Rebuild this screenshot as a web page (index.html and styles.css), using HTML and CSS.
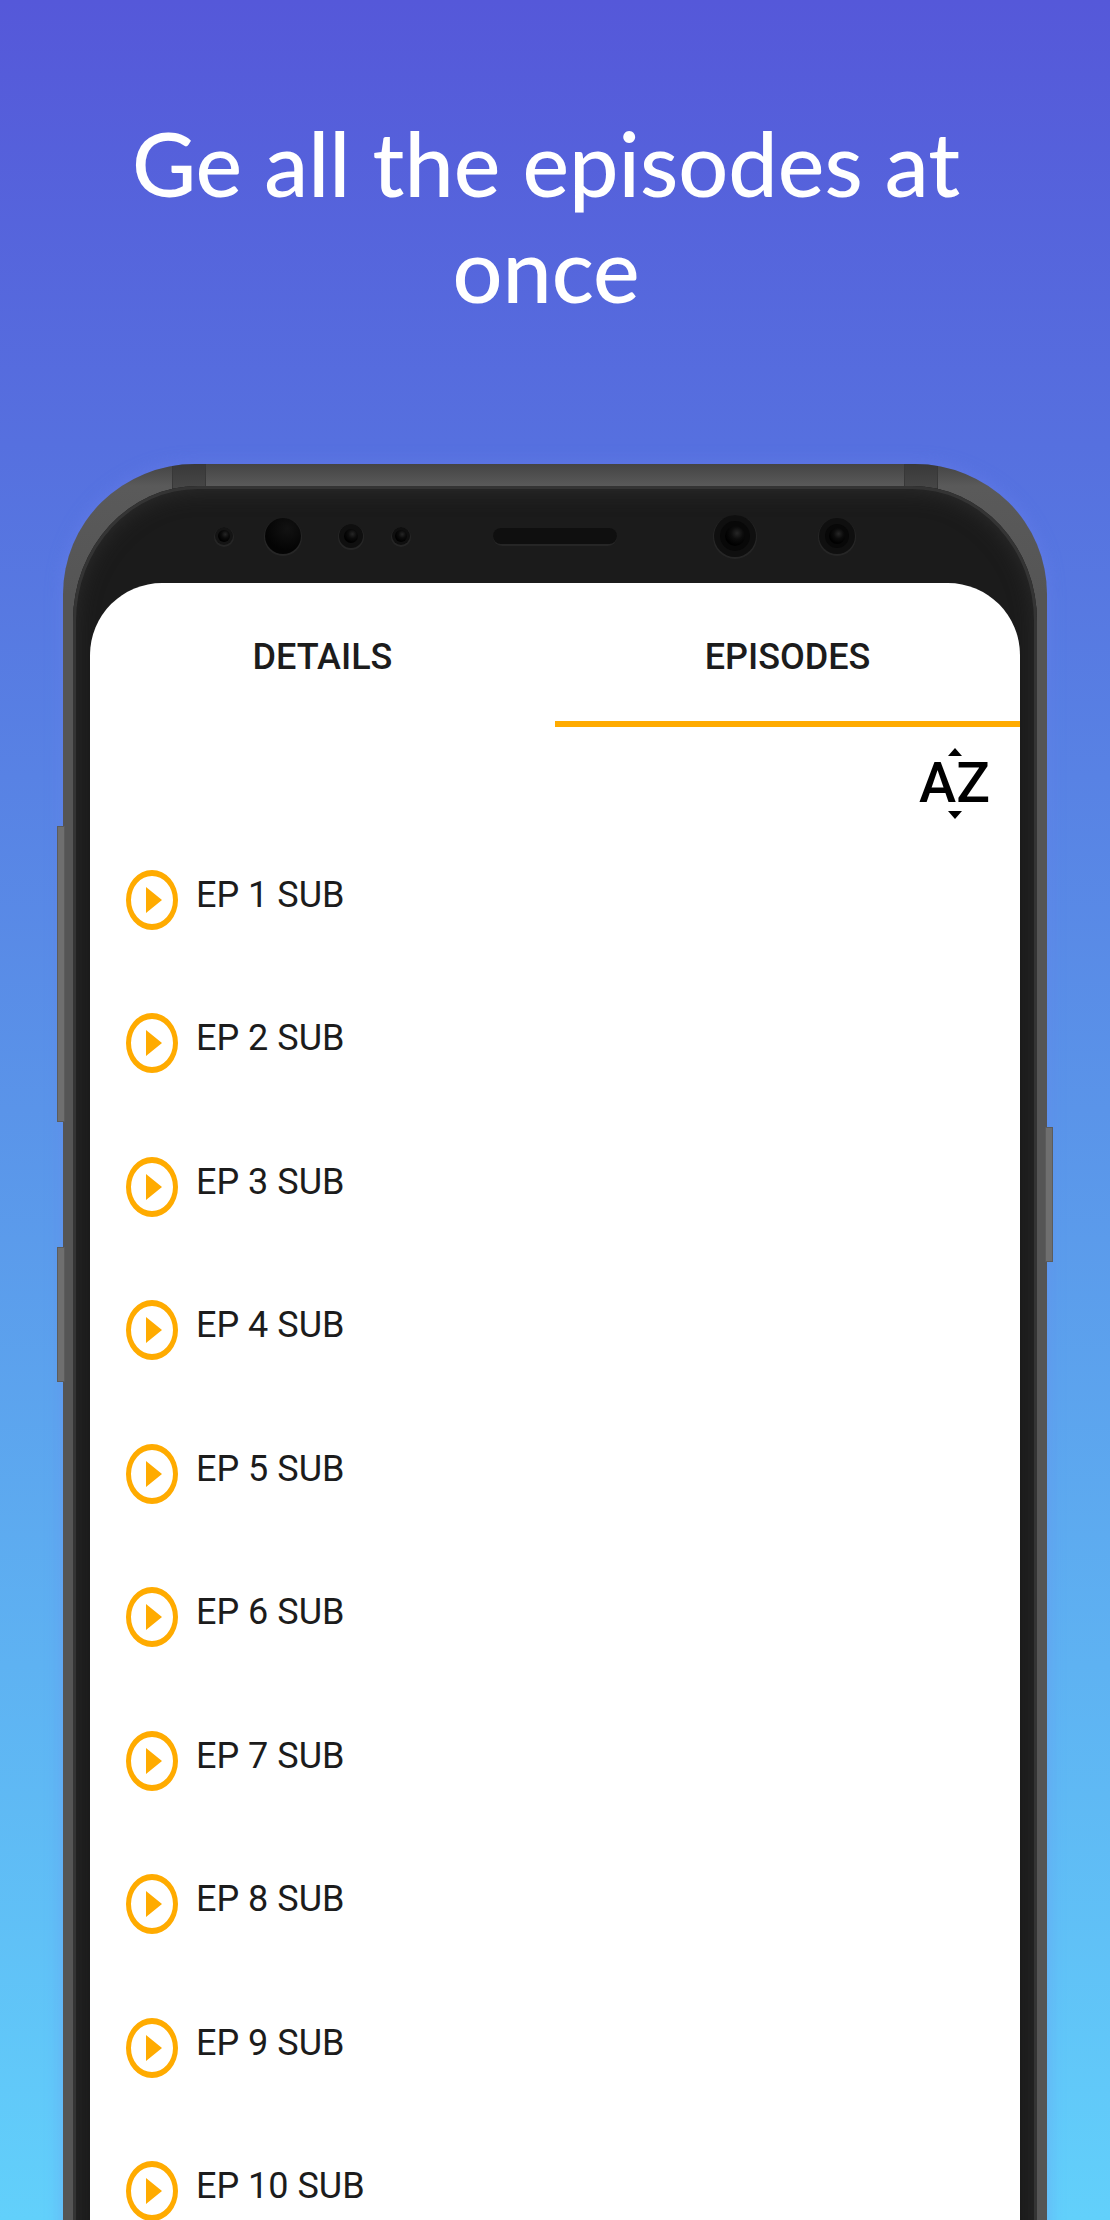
FILE: index.html
```html
<!DOCTYPE html>
<html lang="en">
<head>
<meta charset="utf-8">
<meta name="viewport" content="width=device-width, initial-scale=1">
<title>Episodes</title>
<link rel="stylesheet" href="styles.css">
</head>
<body>
<main class="promo">
  <h1 class="headline">Ge all the episodes at once</h1>
  <div class="phone">
    <span class="key key-volume"></span>
    <span class="key key-assistant"></span>
    <span class="key key-power"></span>
    <div class="frame">
      <div class="bezel">
        <svg class="sensors" viewBox="0 0 964 97" aria-hidden="true">
          <defs>
            <radialGradient id="lens" cx="60%" cy="36%" r="60%">
              <stop offset="0" stop-color="#262626"/>
              <stop offset="0.5" stop-color="#0c0c0c"/>
              <stop offset="1" stop-color="#000"/>
            </radialGradient>
            <radialGradient id="iris" cx="62%" cy="30%" r="60%">
              <stop offset="0" stop-color="#121212"/>
              <stop offset="1" stop-color="#040404"/>
            </radialGradient>
            <symbol id="play" viewBox="0 0 52 60">
              <path fill-rule="evenodd" d="M26 0a26 30 0 0 1 0 60a26 30 0 0 1 0-60zM26 6a21 24 0 0 0 0 48a21 24 0 0 0 0-48zM20 17l16 13l-16 13z"/>
            </symbol>
          </defs>
          <g fill="#262626">
            <circle cx="151" cy="51" r="10"/>
            <circle cx="210" cy="51" r="19"/>
            <circle cx="278" cy="51" r="13"/>
            <circle cx="328" cy="51" r="10"/>
            <rect x="420" y="42" width="124" height="18" rx="9"/>
            <circle cx="662" cy="51" r="22"/>
            <circle cx="764" cy="51" r="19"/>
          </g>
          <g fill="#0f0f0f">
            <circle cx="151" cy="50" r="9" fill="#141414"/>
            <circle cx="278" cy="50" r="12"/>
            <circle cx="328" cy="50" r="9"/>
            <rect x="420" y="42" width="124" height="16" rx="8"/>
            <circle cx="662" cy="50" r="21"/>
            <circle cx="764" cy="50" r="18"/>
          </g>
          <circle cx="210" cy="50" r="18" fill="url(#iris)"/>
          <g fill="#080808">
            <circle cx="662" cy="50" r="15"/>
            <circle cx="764" cy="50" r="12"/>
          </g>
          <g fill="url(#lens)">
            <circle cx="151" cy="50" r="6"/>
            <circle cx="278" cy="50" r="7"/>
            <circle cx="328" cy="50" r="6"/>
            <circle cx="662" cy="50" r="10"/>
            <circle cx="764" cy="50" r="8"/>
          </g>
        </svg>
        <div class="screen">
          <nav class="tabs">
            <a class="tab" href="#details">DETAILS</a>
            <a class="tab tab-active" href="#episodes" aria-current="page">EPISODES</a>
          </nav>
          <div class="toolbar">
            <button class="sort" type="button" aria-label="Sort alphabetically">
              <svg class="caret" viewBox="0 0 14 8" aria-hidden="true"><path d="M7 0l7 8H0z"/></svg>
              <span class="sort-letters">AZ</span>
              <svg class="caret" viewBox="0 0 14 8" aria-hidden="true"><path d="M0 0h14L7 8z"/></svg>
            </button>
          </div>
          <ul class="episodes" id="episodes">
            <li><a class="episode" href="#ep1"><svg class="play" aria-hidden="true"><use href="#play"/></svg>EP 1 SUB</a></li>
            <li><a class="episode" href="#ep2"><svg class="play" aria-hidden="true"><use href="#play"/></svg>EP 2 SUB</a></li>
            <li><a class="episode" href="#ep3"><svg class="play" aria-hidden="true"><use href="#play"/></svg>EP 3 SUB</a></li>
            <li><a class="episode" href="#ep4"><svg class="play" aria-hidden="true"><use href="#play"/></svg>EP 4 SUB</a></li>
            <li><a class="episode" href="#ep5"><svg class="play" aria-hidden="true"><use href="#play"/></svg>EP 5 SUB</a></li>
            <li><a class="episode" href="#ep6"><svg class="play" aria-hidden="true"><use href="#play"/></svg>EP 6 SUB</a></li>
            <li><a class="episode" href="#ep7"><svg class="play" aria-hidden="true"><use href="#play"/></svg>EP 7 SUB</a></li>
            <li><a class="episode" href="#ep8"><svg class="play" aria-hidden="true"><use href="#play"/></svg>EP 8 SUB</a></li>
            <li><a class="episode" href="#ep9"><svg class="play" aria-hidden="true"><use href="#play"/></svg>EP 9 SUB</a></li>
            <li><a class="episode" href="#ep10"><svg class="play" aria-hidden="true"><use href="#play"/></svg>EP 10 SUB</a></li>
          </ul>
        </div>
      </div>
    </div>
  </div>
</main>
</body>
</html>
```

FILE: styles.css
```css
* {
  box-sizing: border-box;
}

body {
  margin: 0;
  font-family: Roboto, sans-serif;
  color: #1c1c1c;
}

a {
  color: inherit;
  text-decoration: none;
}

.promo {
  height: 100vh;
  overflow: hidden;
  padding: 110px 63px 0;
  background: linear-gradient(#5558d9, #5670df 20%, #5a94e9 50%, #62d0fb);
}

.headline {
  margin: 0 18px 142px 0;
  font: 500 88px/106px Lato, sans-serif;
  color: #fff;
  text-align: center;
}

.phone {
  position: relative;
}

/* Side keys sit over the metal frame */
.key {
  position: absolute;
  z-index: 1;
  width: 8px;
  border: 1px solid #5c5c5c;
  background: #6f6f6f;
}

.key-volume {
  top: 362px;
  left: -6px;
  height: 296px;
}

.key-assistant {
  top: 783px;
  left: -6px;
  height: 135px;
}

.key-power {
  top: 663px;
  right: -6px;
  height: 135px;
}

.frame {
  position: relative;
  overflow: hidden;
  padding: 22px 10px 0;
  border-radius: 132px 132px 0 0 / 130px 130px 0 0;
  background: linear-gradient(#444, #5a5a5a 22px, #555 130px);
  box-shadow: 0 0 18px rgba(110, 130, 240, 0.4);
}

/* Antenna bands */
.frame::before,
.frame::after {
  content: "";
  position: absolute;
  top: 0;
  width: 32px;
  height: 30px;
  border: solid #383838;
  border-width: 0 1px;
  background: rgba(40, 40, 40, 0.4);
}

.frame::before {
  left: 109px;
}

.frame::after {
  right: 109px;
}

.bezel {
  position: relative;
  z-index: 1;
  padding: 0 17px;
  border-radius: 125px 125px 0 0 / 135px 135px 0 0;
  background: #1b1b1b;
  box-shadow: inset 0 0 0 3px #343434, inset 0 4px 22px #2e2e2e;
}

.sensors {
  display: block;
  width: calc(100% + 34px);
  height: 97px;
  margin: 0 -17px;
}

.screen {
  overflow: hidden;
  border-radius: 72px 72px 0 0;
  background: #fff;
}

.tabs {
  display: grid;
  grid-template-columns: 1fr 1fr;
}

.tab {
  padding: 50px 0 40px;
  border-bottom: 6px solid transparent;
  font-size: 36px;
  font-weight: 500;
  line-height: 48px;
  text-align: center;
}

.tab-active {
  border-bottom-color: #ffab00;
}

.toolbar {
  display: flex;
  justify-content: flex-end;
  padding: 21px 30px 51px;
}

.sort {
  display: flex;
  flex-direction: column;
  align-items: center;
  gap: 5px;
  padding: 0;
  border: 0;
  background: none;
  color: #000;
}

.sort-letters {
  font: 500 56px/45px Roboto, sans-serif;
}

.caret {
  display: block;
  width: 14px;
  height: 8px;
}

.episodes {
  display: grid;
  grid-auto-rows: 143px 144px;
  margin: 0;
  padding: 0 36px;
  list-style: none;
}

.episode {
  display: flex;
  gap: 18px;
  font-size: 36px;
  line-height: 50px;
}

.play {
  width: 52px;
  height: 60px;
  fill: #ffab00;
}
```
